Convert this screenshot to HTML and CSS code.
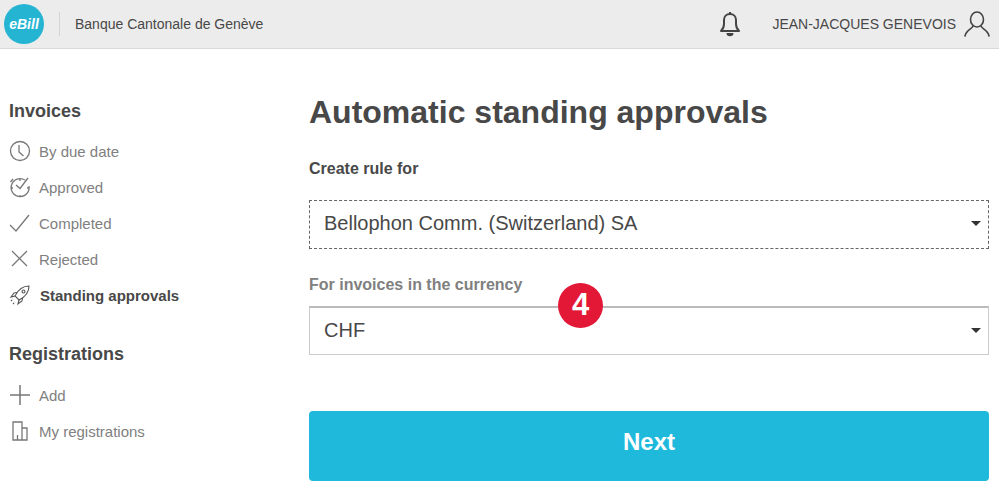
FILE: index.html
```html
<!DOCTYPE html>
<html lang="en">
<head>
    <meta charset="UTF-8">
    <meta name="viewport" content="width=device-width, initial-scale=1.0">
    <title>Automatic standing approvals</title>
    <link rel="stylesheet" href="styles.css">
</head>
<body>
    <div class="header">
        <div class="logo">eBill</div>
        <div class="bank-name">Banque Cantonale de Genève</div>
        <svg class="bell" width="22" height="26" viewBox="0 0 22 26" fill="none" stroke="#444" stroke-width="2">
            <path d="M2 20c2-2 3-3 3-7V9c0-3.500 2.500-6 6-6s6 2.500 6 6v4c0 4 1 5 3 7z" stroke-linejoin="round"/>
            <path d="M11 1v2"/>
            <path d="M8.500 22c0 3 5 3 5 0" fill="#444"/>
        </svg>
        <div class="user-name">JEAN-JACQUES GENEVOIS</div>
        <svg class="user" width="26" height="26" viewBox="0 0 26 26" fill="none" stroke="#444" stroke-width="1.600">
            <ellipse cx="13" cy="8.500" rx="6.500" ry="7.500"/>
            <path d="M9 15c-1 3-7 4-8 10M17 15c1 3 7 4 8 10" stroke-linecap="round"/>
        </svg>
    </div>

    <div class="page">
        <div class="sidebar">
            <h3>Invoices</h3>
            <a class="nav-item">
                <svg width="22" height="22" viewBox="0 0 22 22" fill="none" stroke="#777" stroke-width="1.300">
                    <circle cx="11" cy="11" r="9.500"/>
                    <path d="M10 5v7l4.500 4"/>
                </svg>
                By due date
            </a>
            <a class="nav-item">
                <svg width="22" height="22" viewBox="0 0 22 22" fill="none" stroke="#777" stroke-width="1.300">
                    <path d="M16 4A9 9 0 1 0 20 10"/>
                    <path d="M7 9l4 3.500L19 2"/>
                    <path d="M4 3L1.500 6M11 3v2M11 19v2M2 12h2M18 12h2"/>
                </svg>
                Approved
            </a>
            <a class="nav-item">
                <svg width="22" height="22" viewBox="0 0 22 22" fill="none" stroke="#777" stroke-width="1.300">
                    <path d="M1 13l6 6L20 3"/>
                </svg>
                Completed
            </a>
            <a class="nav-item">
                <svg width="22" height="22" viewBox="0 0 22 22" fill="none" stroke="#777" stroke-width="1.300">
                    <path d="M3 3l15 15M18 3L3 18"/>
                </svg>
                Rejected
            </a>
            <a class="nav-item active">
                <svg width="22" height="22" viewBox="0 0 22 22" fill="none" stroke="#555" stroke-width="1.100">
                    <path d="M6 12c3-6 8-10 14-10 0 6-4 11-10 14z"/>
                    <path d="M6 12l-4 1 3-4 3-.500M10 16l-1 4 4-3 .500-3"/>
                    <circle cx="14.500" cy="7.500" r="1.500"/>
                    <path d="M2 17l2-2M4 20l2-2" stroke-dasharray="1.500 1"/>
                </svg>
                Standing approvals
            </a>

            <h3 class="second">Registrations</h3>
            <a class="nav-item">
                <svg width="22" height="22" viewBox="0 0 22 22" fill="none" stroke="#777" stroke-width="1.500">
                    <path d="M11 1v20M1 11h20"/>
                </svg>
                Add
            </a>
            <a class="nav-item">
                <svg width="22" height="22" viewBox="0 0 22 22" fill="none" stroke="#777" stroke-width="1.300">
                    <path d="M4 20V2h9v18zM13 8h5v12h-5M4 20h14M8.500 20v-5"/>
                </svg>
                My registrations
            </a>
        </div>

        <div class="content">
            <h1>Automatic standing approvals</h1>
            <div class="label">Create rule for</div>
            <div class="select focused">Bellophon Comm. (Switzerland) SA<span class="arrow"></span></div>
            <div class="label muted">For invoices in the currency</div>
            <div class="select">CHF<span class="arrow"></span></div>
            <button type="button" class="button">Next</button>
            <div class="badge">4</div>
        </div>
    </div>
</body>
</html>
```

FILE: styles.css
```css
body {
    font-family: "Liberation Sans", Arial, sans-serif;
    color: #484848;
    margin: 0;
    background-color: #fff;
    overflow: hidden;
}
.header {
    display: flex;
    align-items: center;
    height: 48px;
    background-color: #ececec;
    border-bottom: 1px solid #d9d9d9;
}
.logo {
    width: 40px;
    height: 40px;
    line-height: 40px;
    margin-left: 4px;
    border-radius: 50%;
    background-color: #25b5d3;
    color: #fff;
    font-size: 14px;
    font-weight: bold;
    font-style: italic;
    text-align: center;
}
.bank-name {
    margin-left: 15px;
    padding-left: 15px;
    line-height: 24px;
    border-left: 1px solid #d5d5d5;
    font-size: 14px;
}
.bell {
    margin-left: auto;
}
.user-name {
    margin-left: 31px;
    font-size: 14px;
}
.user {
    margin-left: 8px;
    margin-right: 9px;
}
.page {
    position: relative;
    display: flex;
}
.sidebar {
    width: 300px;
    padding-left: 9px;
    padding-top: 52px;
}
h3 {
    margin: 0 0 12px;
    font-size: 18px;
    line-height: 20px;
}
h3.second {
    margin-top: 31px;
    margin-bottom: 13px;
}
.nav-item {
    display: flex;
    align-items: center;
    gap: 8px;
    height: 36px;
    font-size: 15px;
    color: #808080;
}
.nav-item.active {
    gap: 9px;
    font-weight: bold;
    color: #484848;
}
.content {
    width: 680px;
    padding-top: 44px;
}
h1 {
    margin: 0 0 28px;
    font-size: 32px;
    line-height: 38px;
}
.label {
    font-size: 16px;
    font-weight: bold;
    line-height: 20px;
    margin-bottom: 21px;
}
.label.muted {
    color: #808080;
    margin-bottom: 11px;
}
.select {
    position: relative;
    box-sizing: border-box;
    height: 49px;
    line-height: 44px;
    padding-left: 14px;
    margin-bottom: 25px;
    border: 1px solid #ccc;
    border-top: 2px solid #bbb;
    font-size: 20px;
}
.select.focused {
    line-height: 45px;
    border: 1px dashed #666;
    margin-bottom: 26px;
}
.arrow {
    position: absolute;
    right: 7px;
    top: 20px;
    border-left: 5px solid transparent;
    border-right: 5px solid transparent;
    border-top: 5px solid #333;
}
.button {
    display: block;
    width: 100%;
    height: 70px;
    margin-top: 56px;
    padding-bottom: 10px;
    background-color: #1fb9dc;
    color: #fff;
    border: none;
    border-radius: 4px;
    font-family: inherit;
    font-size: 24px;
    font-weight: bold;
}
.badge {
    position: absolute;
    left: 558px;
    top: 234px;
    width: 45px;
    height: 45px;
    line-height: 44px;
    border-radius: 50%;
    background-color: #e31837;
    color: #fff;
    font-size: 31px;
    font-weight: bold;
    text-align: center;
}
```
